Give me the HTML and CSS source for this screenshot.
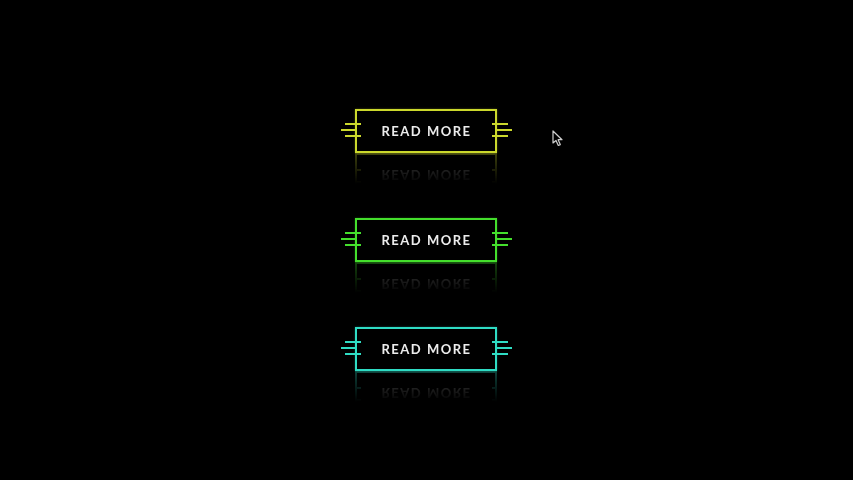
FILE: index.html
```html
<!DOCTYPE html>
<html>
<head>
<meta charset="utf-8">
<link rel="stylesheet" href="styles.css">
</head>
<body>
<div class="stack">
  <a class="btn btn-yellow" href="#">READ MORE</a>
  <a class="btn btn-green" href="#">READ MORE</a>
  <a class="btn btn-cyan" href="#">READ MORE</a>
</div>
<svg class="cursor" width="12" height="17" viewBox="0 0 12 17">
  <path d="M1 1 L1 13 L4 10.5 L6.3 15.5 L8.3 14.6 L6.1 9.7 L10 9.7 Z" fill="#000" stroke="#cfcfcf" stroke-width="1.2" stroke-linejoin="round"/>
</svg>
</body>
</html>
```
FILE: styles.css
```css
html, body {
  margin: 0;
  padding: 0;
  background: #000;
  height: 100%;
}
body {
  overflow: hidden;
  position: relative;
}
.stack {
  height: 480px;
  display: flex;
  flex-direction: column;
  align-items: center;
  justify-content: center;
  gap: 65px;
  padding-right: 1px;
}
.btn {
  --c: #cfdc2b;
  position: relative;
  box-sizing: border-box;
  width: 142px;
  height: 44px;
  border: 2px solid var(--c);
  display: flex;
  align-items: center;
  justify-content: center;
  text-decoration: none;
  color: #ececec;
  font-family: "Lato", "Open Sans", sans-serif;
  font-weight: 700;
  font-size: 13px;
  letter-spacing: 1.5px;
  padding-left: 1px;
  box-shadow: 0 0 2px color-mix(in srgb, var(--c) 35%, transparent);
  -webkit-box-reflect: below 0px linear-gradient(transparent 30%, rgba(0,0,0,0.3));
}
.btn-yellow { --c: #cbd82c; }
.btn-green { --c: #44df2c; }
.btn-cyan { --c: #2fdcc4; }
.btn::before,
.btn::after {
  content: "";
  position: absolute;
  top: 12px;
  width: 20px;
  height: 14px;
}
.btn::before {
  left: -16px;
  background:
    linear-gradient(var(--c), var(--c)) 4px 0 / 16px 2px no-repeat,
    linear-gradient(var(--c), var(--c)) 0 6px / 16px 2px no-repeat,
    linear-gradient(var(--c), var(--c)) 4px 12px / 16px 2px no-repeat;
}
.btn::after {
  right: -17px;
  background:
    linear-gradient(var(--c), var(--c)) 0 0 / 16px 2px no-repeat,
    linear-gradient(var(--c), var(--c)) 5px 6px / 15px 2px no-repeat,
    linear-gradient(var(--c), var(--c)) 0 12px / 16px 2px no-repeat;
}
.cursor {
  position: absolute;
  left: 552px;
  top: 130px;
}
```
